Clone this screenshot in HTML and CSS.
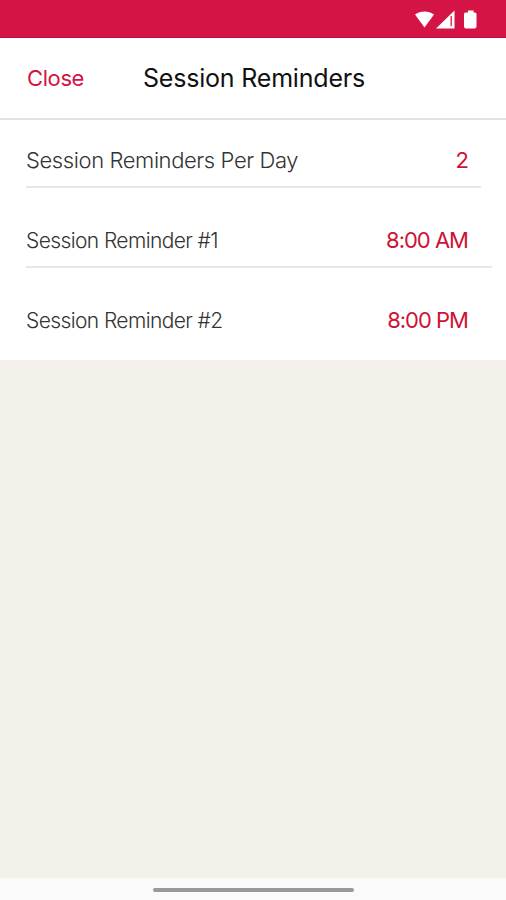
FILE: index.html
```html
<!DOCTYPE html>
<html lang="en">
<head>
    <meta charset="UTF-8">
    <meta name="viewport" content="width=device-width, initial-scale=1.0">
    <title>Session Reminders</title>
    <link rel="stylesheet" href="styles.css">
</head>
<body>
    <div class="status-bar">
        <svg class="status-icons" width="64" height="20" viewBox="0 0 64 20" fill="#fff">
            <path d="M1 4.5C6.500 0.500 14.500 0.500 20 4.500L10.500 17.500Z"/>
            <path d="M40.500 0.500V18.500H22Z"/>
            <path d="M37.200 6V16" stroke="#d51446" stroke-width="1.300"/>
            <path d="M54 0.500H59.500V2.500H61Q62.500 2.500 62.500 4V16.500Q62.500 18.500 60.500 18.500H52Q50 18.500 50 16.500V4Q50 2.500 51.500 2.500H54Z"/>
        </svg>
    </div>

    <header class="header">
        <a class="close">Close</a>
        <h1 class="title">Session Reminders</h1>
    </header>

    <main class="list">
        <div class="row row-count">
            <span class="label">Session Reminders Per Day</span>
            <span class="value">2</span>
        </div>
        <div class="row">
            <span class="label">Session Reminder #1</span>
            <span class="value">8:00 AM</span>
        </div>
        <div class="row row-last">
            <span class="label">Session Reminder #2</span>
            <span class="value">8:00 PM</span>
        </div>
    </main>

    <div class="nav-bar">
        <div class="nav-handle"></div>
    </div>
</body>
</html>
```

FILE: styles.css
```css
* {
    margin: 0;
    padding: 0;
    box-sizing: border-box;
}

body {
    height: 100vh;
    display: flex;
    flex-direction: column;
    background: #f4f0ea;
    font-family: Inter, "Liberation Sans", sans-serif;
    overflow: hidden;
    white-space: nowrap;
}

.status-bar {
    height: 38px;
    padding: 10px 28px 0 0;
    display: flex;
    justify-content: flex-end;
    background: #d51446;
    border-bottom: 1px solid #c90a38;
}

/* Header */
.header {
    height: 82px;
    padding-left: 27px;
    display: flex;
    align-items: center;
    background: #fff;
    border-bottom: 2px solid #e2e2e2;
}

.close {
    width: 116px;
    font-size: 22px;
    letter-spacing: -0.4px;
    color: #d5133f;
}

.title {
    font-size: 25px;
    font-weight: 400;
    letter-spacing: -0.2px;
    color: #111;
}

/* Reminder rows */
.list {
    height: 240px;
    background: #fff;
}

.row {
    height: 68px;
    margin: 0 14px 12px 26px;
    padding: 26px 24px 0 0;
    display: flex;
    align-items: baseline;
    justify-content: space-between;
    line-height: 28px;
    border-bottom: 2px solid #e8e8e8;
}

.row-count {
    margin-right: 25px;
    padding-right: 13px;
    border-color: #e8e7e4;
}

.row-last {
    margin-bottom: 0;
    border-bottom: none;
}

.label {
    font-size: 21px;
    font-weight: 300;
    letter-spacing: -0.6px;
    color: #333;
}

.row-count .label {
    font-size: 22px;
    letter-spacing: -0.4px;
}

.value {
    font-size: 22px;
    letter-spacing: -1px;
    color: #cf1233;
}

/* Bottom gesture bar */
.nav-bar {
    height: 22px;
    padding-top: 2px;
    margin-top: auto;
    display: flex;
    align-items: center;
    justify-content: center;
    background: #fafafa;
}

.nav-handle {
    width: 201px;
    height: 4px;
    border-radius: 2px;
    background: #999;
}
```
